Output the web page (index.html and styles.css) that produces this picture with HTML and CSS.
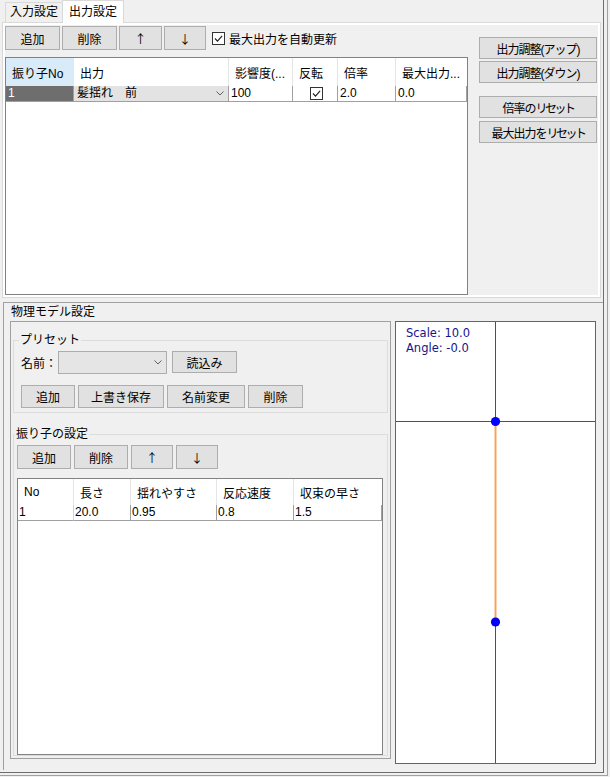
FILE: index.html
```html
<!DOCTYPE html>
<html lang="ja">
<head>
    <meta charset="UTF-8">
    <title>出力設定</title>
    <link rel="stylesheet" href="styles.css">
</head>
<body>
<div class="shell">
<div class="form">
    <div class="tabs">
        <div class="tab">入力設定</div>
        <div class="tab active">出力設定</div>
    </div>
    <div class="tab-page">
        <div class="page-inner">
            <div class="out-left">
                <div class="toolbar">
                    <button class="btn w55">追加</button>
                    <button class="btn w55">削除</button>
                    <button class="btn w43 arrow">↑</button>
                    <button class="btn w42 arrow">↓</button>
                    <label class="check-label">
                        <span class="check"><svg viewBox="0 0 11 11"><path d="M2 5.5l2.5 2.6 4.6-5.2" /></svg></span>
                        最大出力を自動更新
                    </label>
                </div>
                <div class="grid out-grid">
                    <div class="grid-row">
                        <div class="hd sel">振り子No</div>
                        <div class="hd">出力</div>
                        <div class="hd">影響度(...</div>
                        <div class="hd">反転</div>
                        <div class="hd">倍率</div>
                        <div class="hd">最大出力...</div>
                    </div>
                    <div class="grid-row">
                        <div class="cell rowhead">1</div>
                        <div class="cell combo-cell">髪揺れ　前<svg class="chev" viewBox="0 0 8 5"><path d="M0.5 0.5L4 4L7.5 0.5" /></svg></div>
                        <div class="cell">100</div>
                        <div class="cell center"><span class="check"><svg viewBox="0 0 11 11"><path d="M2 5.5l2.5 2.6 4.6-5.2" /></svg></span></div>
                        <div class="cell">2.0</div>
                        <div class="cell">0.0</div>
                    </div>
                </div>
            </div>
            <div class="out-right">
                <button class="btn narrow">出力調整(アップ)</button>
                <button class="btn narrow gap2">出力調整(ダウン)</button>
                <button class="btn narrow gap13">倍率の<span class="kana">リセット</span></button>
                <button class="btn narrow gap3">最大出力を<span class="kana">リセット</span></button>
            </div>
        </div>
    </div>

    <div class="phys">
        <div class="phys-title">物理モデル設定</div>
        <div class="phys-body">
            <div class="phys-left">
                <fieldset class="group preset">
                    <legend>プリセット</legend>
                    <div class="name-row">
                        <span class="lbl">名前：</span>
                        <div class="combo"><svg class="chev" viewBox="0 0 8 5"><path d="M0.5 0.5L4 4L7.5 0.5" /></svg></div>
                        <button class="btn load">読込み</button>
                    </div>
                    <div class="btn-row">
                        <button class="btn w54">追加</button>
                        <button class="btn w86">上書き保存</button>
                        <button class="btn w78">名前変更</button>
                        <button class="btn w55">削除</button>
                    </div>
                </fieldset>
                <fieldset class="group pend">
                    <legend>振り子の設定</legend>
                    <div class="pend-bar">
                        <button class="btn w54">追加</button>
                        <button class="btn w54">削除</button>
                        <button class="btn w42 arrow">↑</button>
                        <button class="btn w42 arrow">↓</button>
                    </div>
                    <div class="grid pend-grid">
                        <div class="grid-row">
                            <div class="hd">No</div>
                            <div class="hd">長さ</div>
                            <div class="hd">揺れやすさ</div>
                            <div class="hd">反応速度</div>
                            <div class="hd">収束の早さ</div>
                        </div>
                        <div class="grid-row">
                            <div class="cell">1</div>
                            <div class="cell">20.0</div>
                            <div class="cell">0.95</div>
                            <div class="cell">0.8</div>
                            <div class="cell">1.5</div>
                        </div>
                    </div>
                </fieldset>
            </div>
            <div class="canvas">
                <svg width="199" height="441" viewBox="0 0 199 441">
                    <line x1="99.5" y1="0" x2="99.5" y2="441" class="axis" />
                    <line x1="0" y1="99.5" x2="199" y2="99.5" class="axis" />
                    <line x1="99.5" y1="99.5" x2="99.5" y2="300" class="bone" />
                    <circle cx="99.5" cy="99.5" r="4.6" class="joint" />
                    <circle cx="99.5" cy="300" r="4.6" class="joint" />
                    <text x="10" y="15" class="info">Scale: 10.0</text>
                    <text x="10" y="30" class="info">Angle: -0.0</text>
                </svg>
            </div>
        </div>
    </div>
</div>
</div>
</body>
</html>
```

FILE: styles.css
```css
* { box-sizing: border-box; }
body { margin: 0; background: #f0f0f0; font-family: "Liberation Sans", "Noto Sans CJK JP", sans-serif; font-size: 12px; color: #000; overflow: hidden; }
.shell { width: 608px; height: 776px; border-right: 1px solid #a0a0a0; border-bottom: 1px solid #a0a0a0; }
.form { width: 604px; height: 773px; border-right: 1px solid #6d6d6d; border-bottom: 1px solid #6d6d6d; }

/* tabs */
.tabs { display: flex; align-items: flex-end; height: 22px; padding-left: 5px; }
.tab { width: 58px; height: 20px; line-height: 19px; text-align: center; border: 1px solid #d9d9d9; border-bottom: none; background: #f0f0f0; }
.tab.active { width: 62px; height: 23px; line-height: 22px; margin-left: -1px; margin-bottom: -1px; background: #fff; position: relative; z-index: 1; }
.tab-page { margin-left: 2px; width: 599px; height: 276px; border: 1px solid #d9d9d9; background: #fff; padding: 2px; }
.page-inner { display: flex; height: 100%; background: #f0f0f0; }

/* buttons */
.btn { height: 24px; padding: 0; border: 1px solid #adadad; background: #e1e1e1; font: inherit; color: #000; white-space: nowrap; }
.btn.arrow { font-family: "Noto Sans CJK JP", sans-serif; font-size: 12px; }
.w42 { width: 42px; }
.w43 { width: 43px; }
.w54 { width: 54px; }
.w55 { width: 55px; }
.w78 { width: 78px; }
.w86 { width: 86px; }

.out-left { width: 463px; }
.toolbar { display: flex; align-items: center; gap: 2px; height: 24px; margin-top: 1px; }
.check-label { display: flex; align-items: center; gap: 4px; margin-left: 4px; }
.check { display: inline-block; width: 13px; height: 13px; border: 1px solid #333; background: #fff; }
.check svg { display: block; width: 11px; height: 11px; }
.check path { fill: none; stroke: #222; stroke-width: 1.2; }

.out-right { display: flex; flex-direction: column; width: 118px; margin-left: 11px; padding-top: 12px; }
.out-right .btn { height: 22px; width: 118px; }
.narrow { letter-spacing: -1px; }
.kana { letter-spacing: -2.5px; }
.gap2 { margin-top: 2px; }
.gap3 { margin-top: 3px; }
.gap13 { margin-top: 13px; }

/* data grids */
.grid { background: #fff; border: 1px solid #828282; overflow: hidden; }
.grid-row { display: grid; }
.out-grid { margin-top: 7px; height: 238px; }
.out-grid .grid-row { grid-template-columns: 68px 155px 64px 45px 58px 71px; }
.pend-grid { width: 366px; height: 277px; margin-top: 9px; }
.pend-grid .grid-row { grid-template-columns: 56px 57px 86px 77px 88px; }
.hd { display: flex; align-items: center; height: 28px; padding-left: 6px; border-right: 1px solid #e5e5e5; white-space: nowrap; overflow: hidden; }
.pend-grid .hd { height: 26px; }
.hd.sel { background: #d9eaf8; }
.hd:last-child { border-right: none; }
.cell { height: 16px; line-height: 15px; padding-left: 2px; border-right: 1px solid #a0a0a0; border-bottom: 1px solid #a0a0a0; white-space: nowrap; overflow: hidden; }
.pend-grid .cell { padding-left: 1px; }
.pend-grid .cell:first-child { border-right-color: #d4d4d4; }
.cell.rowhead { background: #6e6e6e; color: #fff; }
.cell.combo-cell { display: flex; align-items: center; justify-content: space-between; padding-left: 3px; padding-right: 4px; background: #e3e3e3; }
.cell.center { display: flex; justify-content: center; align-items: center; }
.chev { width: 8px; height: 5px; }
.chev path { fill: none; stroke: #606060; stroke-width: 1; }

/* physics model */
.phys { width: 600px; height: 468px; margin: 4px 0 0 3px; padding: 2px 0 0 6px; border-left: 1px solid #a0a0a0; border-top: 1px solid #a0a0a0; }
.phys-title { height: 14px; line-height: 14px; padding-left: 1px; }
.phys-body { display: flex; align-items: flex-start; gap: 4px; margin-top: 2px; }
.phys-left { width: 381px; height: 438px; padding: 12px 2px 0; border: 1px solid #a0a0a0; }
.group { margin: 0; min-width: 0; border: 1px solid #dcdcdc; }
.group legend { padding: 0 1px; margin-left: -2px; line-height: 13px; }
.preset { padding: 3px 4px 4px 7px; }
.name-row { display: flex; align-items: center; height: 24px; }
.lbl { width: 37px; }
.combo { display: flex; align-items: center; justify-content: flex-end; width: 109px; height: 23px; padding-right: 4px; border: 1px solid #adadad; background: #e5e5e5; }
.btn.load { width: 65px; height: 22px; margin-left: 5px; }
.btn-row { display: flex; gap: 3px; margin-top: 11px; }
.btn-row .btn { height: 23px; }
.pend { margin-top: 15px; padding: 4px 3px 0 3px; }
.pend-bar { display: flex; gap: 3px; }

.canvas { width: 201px; height: 443px; border: 1px solid #646464; background: #fff; }
.canvas svg { display: block; }
.axis { stroke: #505050; stroke-width: 1; }
.bone { stroke: #f4a460; stroke-width: 2; }
.joint { fill: #0000ff; }
.info { font-family: "DejaVu Sans", sans-serif; font-size: 11.5px; fill: #14148c; }
```
